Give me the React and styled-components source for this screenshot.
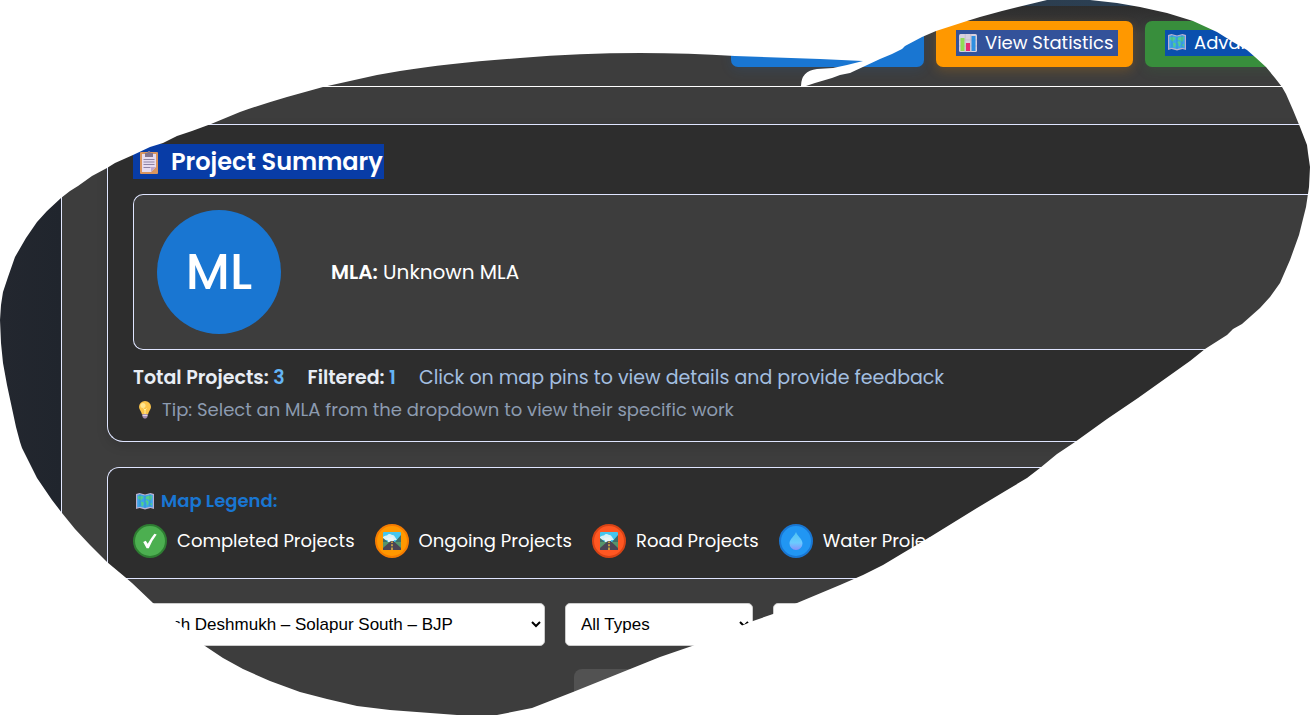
import React from "react";
import styled, { createGlobalStyle } from "styled-components";

const GlobalStyle = createGlobalStyle`
  *, *::before, *::after { box-sizing: border-box; }
  body { margin: 0; background: #fff; }
`;

const Page = styled.div`
  position: relative;
  min-height: 100vh;
  padding: 6px 0 0 61px;
  overflow: hidden;
  background: linear-gradient(90deg, #23272f 0, #20252d 61px, #2c3e50 80%, #26435e 100%);
  font-family: Poppins, Inter, sans-serif;
  color: #fff;
`;

const Panel = styled.div`
  min-height: calc(100vh - 6px);
  border-left: 1px solid #e3e8ff;
  background: #3d3d3d;
`;

const Header = styled.header`
  display: flex;
  justify-content: flex-end;
  gap: 12px;
  padding: 15px 0 19px;
  border-bottom: 1px solid #fff;
  background: linear-gradient(#2d2d2d, #3d3d3d 28px);
`;

const NavButton = styled.button`
  flex: none;
  width: ${(p) => p.$width}px;
  height: 46px;
  padding: 0 0 0 20px;
  border: 0;
  border-radius: ${(p) => (p.$open ? "7px 0 0 7px" : "7px")};
  background: ${(p) => p.$color};
  box-shadow: 0 4px 12px ${(p) => p.$glow};
  color: #fff;
  font: 400 18px/26px Poppins, Inter, sans-serif;
  text-align: left;
  white-space: nowrap;
`;

const Highlight = styled.span`
  display: inline-flex;
  align-items: center;
  gap: ${(p) => p.$gap}px;
  padding-left: ${(p) => p.$pad}px;
  padding-right: ${(p) => p.$end || 0}px;
  background: ${(p) => p.$color};
`;

const Main = styled.main`
  padding: 37px 0 0 45px;
`;

const Card = styled.section`
  border: 1px solid #dfe5ff;
  border-right: 0;
  background: #2d2d2d;
`;

const SummaryCard = styled(Card)`
  padding: 19px 0 17px 25px;
  border-radius: 16px 0 0 16px;
  box-shadow: 0 4px 12px rgba(0, 0, 0, 0.12);
`;

const SummaryTitle = styled.h2`
  display: flex;
  margin: 0 0 15px;
  font-size: 24px;
  font-weight: 600;
  line-height: 35px;
`;

const Profile = styled(Card)`
  display: flex;
  align-items: center;
  gap: 50px;
  padding: 15px 23px;
  border-radius: 10px 0 0 10px;
  background: #3d3d3d;
  font-size: 20px;
`;

const Avatar = styled.div`
  display: grid;
  place-items: center;
  width: 124px;
  height: 124px;
  border-radius: 50%;
  background: #1976d2;
  font-size: 50px;
  font-weight: 500;
`;

const Stats = styled.div`
  display: flex;
  gap: 23px;
  margin-top: 14px;
  font-size: 19px;
  line-height: 28px;
  white-space: nowrap;
`;

const Stat = styled.strong`
  color: #e8edf5;
  font-weight: 600;
`;

const Name = styled.strong`
  font-weight: 600;
`;

const Count = styled.span`
  color: #64b5f6;
`;

const Hint = styled.span`
  color: #a3bfe0;
`;

const Tip = styled.p`
  display: flex;
  align-items: center;
  gap: 6px;
  margin: 4px 0 0;
  padding-left: 1px;
  color: #8c9bb0;
  font-size: 18px;
  line-height: 28px;
`;

const LegendCard = styled(Card)`
  margin-top: 25px;
  padding: 20px 0 20px 25px;
  border-radius: 12px 0 0 12px;
`;

const LegendTitle = styled.h3`
  display: flex;
  align-items: center;
  gap: 7px;
  margin: 0 0 10px;
  padding-left: 3px;
  color: #1976d2;
  font-size: 18px;
  font-weight: 600;
  line-height: 26px;
`;

const LegendList = styled.ul`
  display: flex;
  gap: 20px;
  margin: 0;
  padding: 0;
  list-style: none;
`;

const LegendItem = styled.li`
  display: flex;
  align-items: center;
  gap: 10px;
  font-size: 18px;
  line-height: 26px;
  white-space: nowrap;
`;

const Badge = styled.span`
  display: grid;
  place-items: center;
  width: 34px;
  height: 34px;
  border: 2px solid ${(p) => p.$edge};
  border-radius: 50%;
  background: ${(p) => p.$color};
`;

const Filters = styled.div`
  display: flex;
  gap: 20px;
  margin-top: 24px;
`;

const Select = styled.select`
  width: ${(p) => p.$width}px;
  height: 43px;
  padding: 0 12px 0 11px;
  border: 1px solid #ccc;
  border-radius: 5px;
  background: #fff;
  color: #000;
  font: 17px "Liberation Sans", Arial, sans-serif;
`;

const Actions = styled.div`
  display: flex;
  justify-content: center;
  margin-top: 23px;
  padding-right: 45px;
`;

const ActionButton = styled.button`
  width: 224px;
  height: 46px;
  border: 0;
  border-radius: 8px;
  background: #525252;
`;

const Icon = styled.svg`
  display: block;
  flex: none;
`;

const Surround = styled.svg`
  position: absolute;
  inset: 0;
  width: 100%;
  height: 100%;
  fill: #fff;
  pointer-events: none;
`;

const outline =
  "M0 320 L1 305 L3 292 L8 277 L15 257 L26 238 L37 222 L47 211 L61 198 L70 191 L78 186 L92 176 L107 168 L115 163 L133 155 L150 147 L163 143 L177 136 L192 131 L211 124 L240 112 Q263 104 287 97 L323 87 L377 75 L400 71 Q450 63 520 58 Q580 53 640 53 Q690 53 735 56 L820 59 L863 61 L847 65 L833 68 L817 69 Q801 71 801 86 L806 86 L815 83 L832 78 L840 75 L850 73 L865 66 L880 59 L892 54 L902 49 L905 46 L922 37 L936 31 L967 21 L980 17 L1002 11 L1018 7 L1047 0 L1090 0 L1117 3 L1140 7 L1167 13 L1193 21 L1217 32 L1233 42 L1247 50 L1255 57 L1266 67 L1275 78 L1282 87 L1286 94 L1293 110 L1300 127 L1307 145 L1308 153 L1310 167 L1309 187 L1306 207 L1299 235 L1290 260 L1280 283 L1270 297 L1260 308 L1242 324 L1233 329 L1227 335 L1205 349 L1190 361 L1138 398 L1107 419 L1075 442 L1057 454 L1040 468 L1027 478 L1007 490 L977 508 L930 537 L903 553 L883 565 L863 575 L840 585 L797 603 L773 614 L753 621 L692 646 L660 657 L573 692 L532 708 L497 715 L457 715 L390 710 L357 706 L327 699 L300 692 L270 681 L243 669 L223 658 L205 646 L180 625 L153 603 L132 583 L125 577 L107 562 L90 545 L75 529 L62 513 L52 500 L37 478 L22 448 L20 442 L16 427 L13 413 L7 385 L3 363 L1 343 Z";

function ClipboardIcon() {
  return (
    <Icon width="20" height="24" viewBox="0 0 20 24" aria-hidden="true">
      <rect x="1" y="2" width="18" height="22" rx="1" fill="#d9955f" />
      <path d="M3 4h14v13l-5 5H3z" fill="#e6dcf0" />
      <path d="M17 17h-5v5z" fill="#bda8cf" />
      <path d="M6 3h2.500l.5-2h2l.5 2H14v4H6z" fill="#82748f" />
      <path d="M4.500 9.500h11M4.500 12h11M4.500 14.500h11M4.500 17.500h7" stroke="#8d83a5" strokeWidth="1" />
    </Icon>
  );
}

function ChartIcon() {
  return (
    <Icon width="18" height="18" viewBox="0 0 18 18" aria-hidden="true">
      <rect width="18" height="18" rx="1.500" fill="#d8d0de" />
      <path d="M6.200 0v18M11.800 0v18M0 6h18M0 12h18" stroke="#c2b7cc" strokeWidth=".7" />
      <rect x="1.500" y="4" width="4" height="13" fill="#8fdc55" />
      <rect x="7" y="9" width="4" height="8" fill="#e52b70" />
      <rect x="12.500" y="2" width="4" height="15" fill="#2f8fe0" />
    </Icon>
  );
}

function MapIcon() {
  return (
    <Icon width="18" height="17" viewBox="0 0 18 17" aria-hidden="true">
      <path d="M0 1 3.500 0l5.500 1.500L14.500 0 18 1v15l-3.500-1L9 16.500 3.500 15 0 16z" fill="#b9b0d0" />
      <path d="M1.200 2l2.800-.8L9 2.500l5-1.300 2.800.8v12.500l-2.800-.8L9 15l-5-1.300-2.800.8z" fill="#3da4e8" />
      <path d="M2 3.500l2-.8 3.500 1L7 5.500 5.500 6.500 5 8 3.500 6.500 2 5.500zM5 8.500l2.500.8.3 1.700L6.500 13.500 5.500 13zM9.500 4l2-1 4-.5.5 1.500-1 3-1.500 1L12.500 6.500 11 6l-1 .5zM9.500 7.500l2-.3 1.300 1.800-1 3.500-1-.5-.3-2.500-1-.5zM14 10.500l2-.3v2l-1.500-.2z" fill="#50cf8c" />
      <path d="M4 1.200v12.500M9 2.500V15M14 1.200v12.500" stroke="#2576bd" strokeWidth=".4" />
    </Icon>
  );
}

function BulbIcon() {
  return (
    <Icon width="22" height="18" viewBox="0 0 22 18" aria-hidden="true">
      <path d="M11 0a6 6 0 0 1 6 6c0 2.500-2.500 4.500-3 7.500H8C7.500 10.500 5 8.500 5 6a6 6 0 0 1 6-6z" fill="#fcc54b" />
      <path d="M9.500 7.500 11 9l1.500-1.500M11 9v4" fill="none" stroke="#fff1a0" />
      <circle cx="9" cy="4.500" r="2.500" fill="#ffe58e" />
      <path d="M8.500 13h5v3L12 17.500h-2L8.500 16z" fill="#a58fb0" />
      <path d="M8.500 14.500h5" stroke="#ded2e4" />
    </Icon>
  );
}

function RoadIcon() {
  return (
    <Icon width="18" height="18" viewBox="0 0 18 18" aria-hidden="true">
      <rect width="18" height="18" rx="1" fill="#45c6ee" />
      <path d="M0 5q2-2 4-1.500Q6 1 9 3q2-.5 3 2l2 3H0z" fill="#d9f1f6" />
      <path d="M0 6l5 4H0zM18 3l-6 7h6z" fill="#3f6d69" />
      <path d="M0 10h18v8H0z" fill="#55956b" />
      <path d="M4 6l6-1 1 4-6 1z" fill="#eaf5f5" />
      <path d="M8 9h2.500L18 16v2H0v-2z" fill="#4b4454" />
      <path d="M9 9.500v1.500m0 1.200v2m0 1.300V18" stroke="#ffc73c" strokeWidth="1.300" />
    </Icon>
  );
}

function DropIcon() {
  return (
    <Icon width="14" height="18" viewBox="0 0 14 18" aria-hidden="true">
      <defs>
        <linearGradient id="drop" x2="0" y2="1">
          <stop offset="0" stopColor="#4fc3f1" />
          <stop offset=".6" stopColor="#6bcbff" />
          <stop offset="1" stopColor="#8790fa" />
        </linearGradient>
      </defs>
      <path d="M7 0c1 3.500 6.500 7 6.500 11.500a6.500 6.500 0 0 1-13 0C.500 7 6 3.500 7 0z" fill="url(#drop)" />
    </Icon>
  );
}

function CheckIcon() {
  return (
    <Icon width="16" height="16" viewBox="0 0 16 16" aria-hidden="true">
      <path d="M1.200 9 3.800 7.800l1.900 3Q9 5 12.400.8l2.300.8Q10 7.500 6.800 15.200H4.600z" fill="#fff" />
    </Icon>
  );
}

const legend = [
  { label: "Completed Projects", color: "#4caf50", edge: "#2e7d32", icon: <CheckIcon /> },
  { label: "Ongoing Projects", color: "#ff9800", edge: "#f57c00", icon: <RoadIcon /> },
  { label: "Road Projects", color: "#ff5722", edge: "#d84315", icon: <RoadIcon /> },
  { label: "Water Projects", color: "#2196f3", edge: "#1976d2", icon: <DropIcon /> },
];

export default function App() {
  return (
    <>
      <GlobalStyle />
      <Page>
        <Panel>
          <Header>
            <NavButton $width={193} $color="#1976d2" $glow="rgba(25,118,210,.12)" aria-label="Home" />
            <NavButton $width={197} $color="#ff9800" $glow="rgba(255,152,0,.2)">
              <Highlight $gap={8} $pad={3} $end={5} $color="#33529a">
                <ChartIcon />
                View Statistics
              </Highlight>
            </NavButton>
            <NavButton $width={165} $open $color="#388e3c" $glow="rgba(56,142,60,.16)">
              <Highlight $gap={8} $pad={3} $color="#0a4fae">
                <MapIcon />
                Advanced Map
              </Highlight>
            </NavButton>
          </Header>
          <Main>
            <SummaryCard>
              <SummaryTitle>
                <Highlight $gap={12} $pad={6} $end={1} $color="#083ca6">
                  <ClipboardIcon />
                  Project Summary
                </Highlight>
              </SummaryTitle>
              <Profile as="div">
                <Avatar>ML</Avatar>
                <span>
                  <Name>MLA:</Name> Unknown MLA
                </span>
              </Profile>
              <Stats>
                <Stat>
                  Total Projects: <Count>3</Count>
                </Stat>
                <Stat>
                  Filtered: <Count>1</Count>
                </Stat>
                <Hint>Click on map pins to view details and provide feedback</Hint>
              </Stats>
              <Tip>
                <BulbIcon />
                Tip: Select an MLA from the dropdown to view their specific work
              </Tip>
            </SummaryCard>
            <LegendCard>
              <LegendTitle>
                <MapIcon />
                Map Legend:
              </LegendTitle>
              <LegendList>
                {legend.map((item) => (
                  <LegendItem key={item.label}>
                    <Badge $color={item.color} $edge={item.edge}>
                      {item.icon}
                    </Badge>
                    {item.label}
                  </LegendItem>
                ))}
              </LegendList>
            </LegendCard>
            <Filters>
              <Select $width={438} aria-label="Representative">
                <option>Subhash Deshmukh – Solapur South – BJP</option>
              </Select>
              <Select $width={188} aria-label="Project type">
                <option>All Types</option>
              </Select>
              <Select $width={188} aria-label="Status">
                <option>All Statuses</option>
              </Select>
            </Filters>
            <Actions>
              <ActionButton aria-label="Reset filters" />
            </Actions>
          </Main>
        </Panel>
        <Surround viewBox="0 0 1310 715" preserveAspectRatio="none" aria-hidden="true">
          <path fillRule="evenodd" d={`M-5 -5H1315V720H-5Z ${outline}`} />
        </Surround>
      </Page>
    </>
  );
}
